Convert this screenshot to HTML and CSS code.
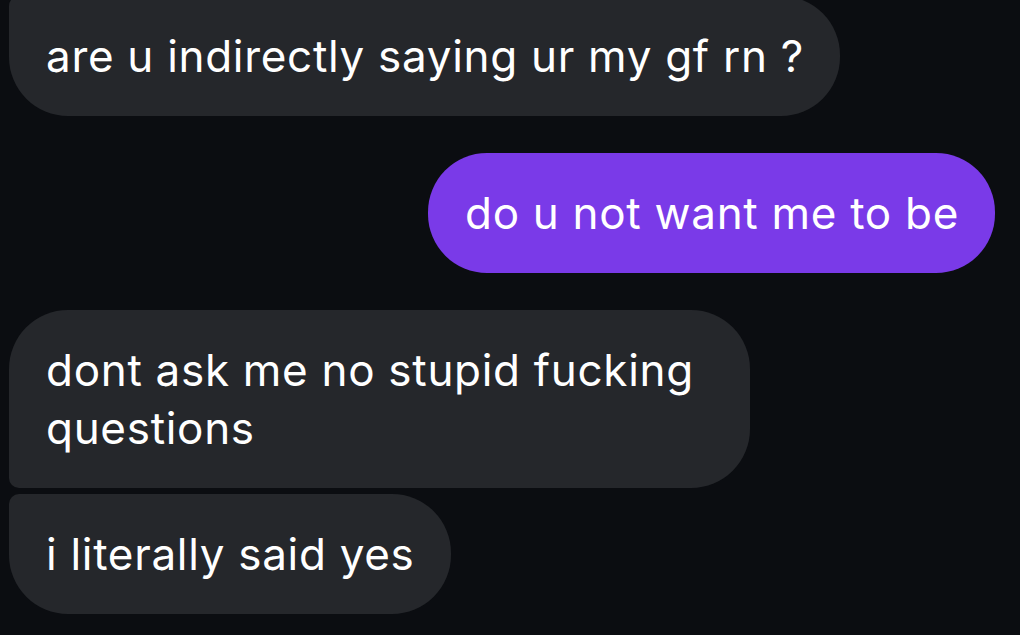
FILE: index.html
```html
<!DOCTYPE html>
<html>
<head>
<meta charset="utf-8">
<link rel="stylesheet" href="styles.css">
</head>
<body>
<div class="chat">
  <div class="msg in first-cont">are u indirectly saying ur my gf rn ?</div>
  <div class="msg out">do u not want me to be</div>
  <div class="group">
    <div class="msg in top wrap">dont ask me no stupid fucking<br>questions</div>
    <div class="msg in bottom">i literally said yes</div>
  </div>
</div>
</body>
</html>
```
FILE: styles.css
```css
html, body {
  margin: 0;
  padding: 0;
  background: #0b0d11;
  width: 1020px;
  height: 635px;
  overflow: hidden;
}
.chat {
  display: flex;
  flex-direction: column;
  gap: 37px;
  padding: 0 25px 0 9px;
  margin-top: -4px;
}
.group {
  display: flex;
  flex-direction: column;
  gap: 6px;
}
.msg {
  font-family: Inter, "Noto Sans", sans-serif;
  font-size: 44px;
  line-height: 58px;
  color: #ffffff;
  padding: 31px 36px 31px 37px;
  border-radius: 59px;
  width: max-content;
  letter-spacing: 0.7px;
}
.in {
  background: #25272b;
  align-self: flex-start;
}
.out {
  background: #7a3ae8;
  align-self: flex-end;
}
.wrap {
  width: 741px;
  box-sizing: border-box;
}
.first-cont {
  border-top-left-radius: 10px;
}
.top {
  border-bottom-left-radius: 10px;
}
.bottom {
  border-top-left-radius: 10px;
}
```
